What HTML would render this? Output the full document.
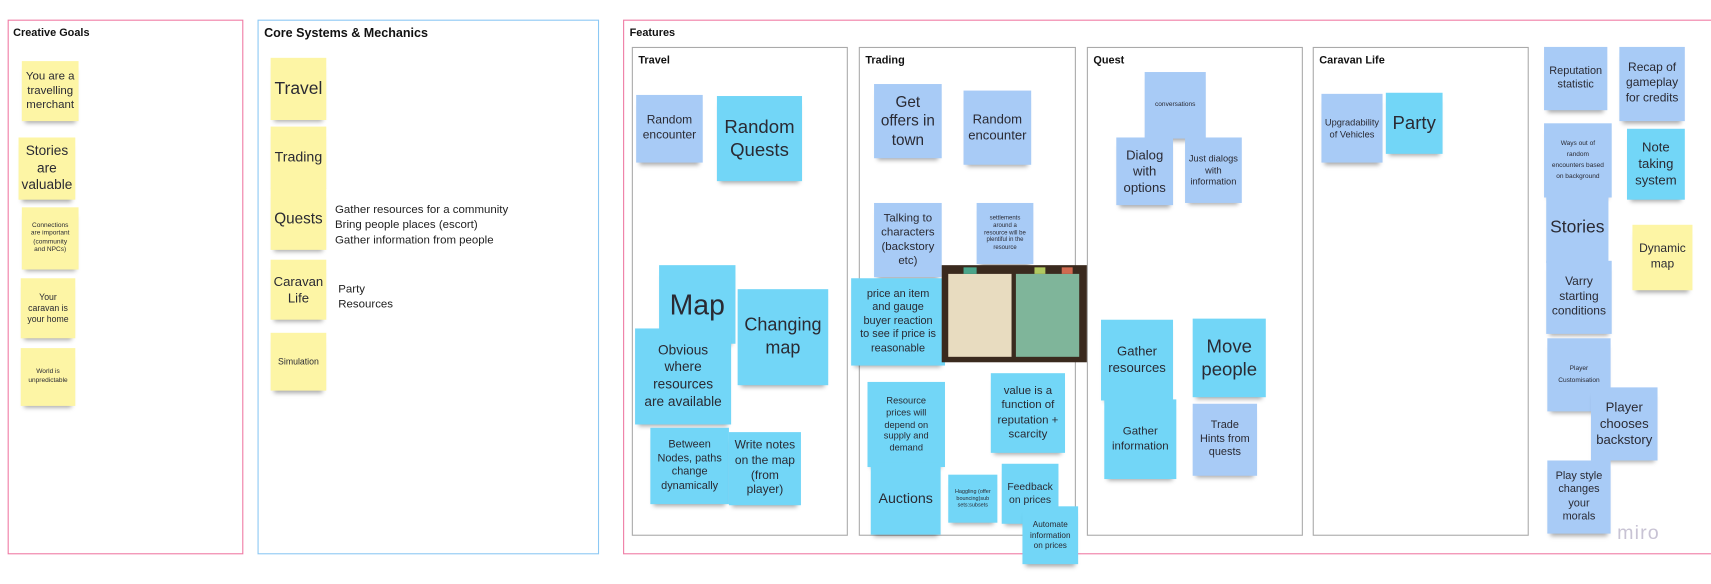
<!DOCTYPE html>
<html><head><meta charset="utf-8"><style>
html,body{margin:0;padding:0;width:1711px;height:584px;overflow:hidden;background:#fff;font-family:"Liberation Sans",sans-serif;color:#1e1e28}
#w{position:absolute;left:0;top:0;width:1568px;height:535px;transform:scale(1.0912);transform-origin:0 0}
.f{position:absolute;box-sizing:border-box;background:#fff}
.t{position:absolute;font-weight:bold;font-size:10px;color:#111}
.s{position:absolute;display:flex;align-items:center;justify-content:center;text-align:center;line-height:1.25;box-shadow:0 5px 4px -3px rgba(0,0,0,.35);box-sizing:border-box;padding:2px 2px;color:#2a2a33}
.y{background:#fdf5a5}.b{background:#a8cbf6}.c{background:#72d6f7}
.p{position:absolute;font-size:10.5px;line-height:14px;color:#222}
</style></head><body><div id="w">
<div class="f" style="left:7px;top:18px;width:216px;height:490px;border:1px solid #ef7aa4"></div>
<div class="t" style="left:12px;top:25px">Creative Goals</div>
<div class="f" style="left:236px;top:18px;width:313px;height:490px;border:1px solid #8cc8f4"></div>
<div class="t" style="left:242px;top:25px;font-size:11.5px">Core Systems &amp; Mechanics</div>
<div class="f" style="left:571px;top:18px;width:1100px;height:490px;border:1px solid #ef7aa4"></div>
<div class="t" style="left:577px;top:25px">Features</div>
<div class="f" style="left:579px;top:43px;width:198px;height:448px;border:1px solid #aaa"></div>
<div class="t" style="left:585px;top:50px">Travel</div>
<div class="f" style="left:787px;top:43px;width:199px;height:448px;border:1px solid #aaa"></div>
<div class="t" style="left:793px;top:50px">Trading</div>
<div class="f" style="left:996px;top:43px;width:198px;height:448px;border:1px solid #aaa"></div>
<div class="t" style="left:1002px;top:50px">Quest</div>
<div class="f" style="left:1203px;top:43px;width:198px;height:448px;border:1px solid #aaa"></div>
<div class="t" style="left:1209px;top:50px">Caravan Life</div>

<div class="s y" style="left:20px;top:56px;width:52px;height:55px;font-size:10.5px;padding:1px">You are a travelling merchant</div>
<div class="s y" style="left:17px;top:126px;width:52px;height:57px;font-size:12.5px">Stories are valuable</div>
<div class="s y" style="left:20px;top:190px;width:52px;height:57px;font-size:6px;padding:2px 5px">Connections are important (community and NPCs)</div>
<div class="s y" style="left:19px;top:255px;width:50px;height:55px;font-size:8px">Your caravan is your home</div>
<div class="s y" style="left:19px;top:319px;width:50px;height:53px;font-size:6px">World is unpredictable</div>

<div class="s y" style="left:248px;top:53px;width:51px;height:57px;font-size:16px">Travel</div>
<div class="s y" style="left:248px;top:116px;width:51px;height:57px;font-size:13px">Trading</div>
<div class="s y" style="left:248px;top:172px;width:51px;height:57px;font-size:14px">Quests</div>
<div class="p" style="left:307px;top:185px">Gather resources for a community<br>Bring people places (escort)<br>Gather information from people</div>
<div class="s y" style="left:248px;top:238px;width:51px;height:55px;font-size:12px">Caravan Life</div>
<div class="p" style="left:310px;top:258px">Party<br>Resources</div>
<div class="s y" style="left:248px;top:305px;width:51px;height:53px;font-size:8px">Simulation</div>

<div class="s b" style="left:583px;top:87px;width:61px;height:62px;font-size:11px">Random encounter</div>
<div class="s c" style="left:657px;top:88px;width:78px;height:78px;font-size:17px">Random Quests</div>
<div class="s c" style="left:604px;top:243px;width:70px;height:72px;font-size:26px">Map</div>
<div class="s c" style="left:676px;top:265px;width:83px;height:88px;font-size:16.5px">Changing map</div>
<div class="s c" style="left:582px;top:301px;width:88px;height:88px;font-size:12.5px;padding:2px 8px">Obvious where resources are available</div>
<div class="s c" style="left:596px;top:392px;width:72px;height:70px;font-size:10px">Between Nodes, paths change dynamically</div>
<div class="s c" style="left:668px;top:396px;width:66px;height:67px;font-size:11px">Write notes on the map (from player)</div>

<div class="s b" style="left:801px;top:77px;width:62px;height:68px;font-size:14px">Get offers in town</div>
<div class="s b" style="left:883px;top:83px;width:62px;height:68px;font-size:12px">Random encounter</div>
<div class="s b" style="left:801px;top:186px;width:62px;height:68px;font-size:10.5px">Talking to characters (backstory etc)</div>
<div class="s b" style="left:895px;top:186px;width:52px;height:56px;font-size:5.5px;padding:2px 4px">settlements around a resource will be plentiful in the resource</div>
<div class="s c" style="left:780px;top:255px;width:86px;height:80px;font-size:10px;padding:2px 6px">price an item and gauge buyer reaction to see if price is reasonable</div>
<div style="position:absolute;left:863px;top:243px;width:133px;height:89px;background:#3a2a1e">
 <div style="position:absolute;left:6px;top:8px;width:58px;height:76px;background:#e8dcc0"></div>
 <div style="position:absolute;left:68px;top:8px;width:58px;height:76px;background:#7fb59a"></div>
 <div style="position:absolute;left:20px;top:2px;width:12px;height:6px;background:#4aa58a"></div>
 <div style="position:absolute;left:85px;top:2px;width:10px;height:6px;background:#b0c860"></div>
 <div style="position:absolute;left:110px;top:2px;width:10px;height:6px;background:#d06a50"></div>
</div>
<div class="s c" style="left:795px;top:350px;width:71px;height:78px;font-size:8.5px;padding:2px 9px">Resource prices will depend on supply and demand</div>
<div class="s c" style="left:908px;top:342px;width:68px;height:73px;font-size:10.5px">value is a function of reputation + scarcity</div>
<div class="s c" style="left:798px;top:424px;width:64px;height:66px;font-size:13px">Auctions</div>
<div class="s c" style="left:869px;top:435px;width:45px;height:44px;font-size:5px">Haggling (offer bouncing)sub sets:subsets</div>
<div class="s c" style="left:918px;top:425px;width:52px;height:55px;font-size:9.5px">Feedback on prices</div>
<div class="s c" style="left:937px;top:464px;width:51px;height:53px;font-size:7.5px">Automate information on prices</div>

<div class="s b" style="left:1049px;top:66px;width:56px;height:61px;font-size:6px">conversations</div>
<div class="s b" style="left:1023px;top:126px;width:52px;height:62px;font-size:12px">Dialog with options</div>
<div class="s b" style="left:1086px;top:126px;width:52px;height:60px;font-size:8.5px;padding:1px">Just dialogs with information</div>
<div class="s c" style="left:1009px;top:293px;width:66px;height:74px;font-size:12px">Gather resources</div>
<div class="s c" style="left:1093px;top:292px;width:67px;height:72px;font-size:17px">Move people</div>
<div class="s c" style="left:1012px;top:366px;width:66px;height:73px;font-size:10.5px">Gather information</div>
<div class="s b" style="left:1093px;top:370px;width:59px;height:66px;font-size:10px;padding:2px 6px">Trade Hints from quests</div>

<div class="s b" style="left:1211px;top:86px;width:56px;height:63px;font-size:8.5px">Upgradability of Vehicles</div>
<div class="s c" style="left:1270px;top:85px;width:52px;height:56px;font-size:17px">Party</div>

<div class="s b" style="left:1415px;top:43px;width:58px;height:58px;font-size:10px">Reputation statistic</div>
<div class="s b" style="left:1484px;top:43px;width:60px;height:68px;font-size:11px">Recap of gameplay for credits</div>
<div class="s b" style="left:1415px;top:113px;width:62px;height:68px;font-size:6px;line-height:1.7;padding:2px 6px">Ways out of random encounters based on background</div>
<div class="s c" style="left:1491px;top:118px;width:53px;height:65px;font-size:12px">Note taking system</div>
<div class="s b" style="left:1417px;top:176px;width:57px;height:65px;font-size:16px">Stories</div>
<div class="s y" style="left:1496px;top:206px;width:55px;height:60px;font-size:11px">Dynamic map</div>
<div class="s b" style="left:1417px;top:239px;width:60px;height:67px;font-size:11px">Varry starting conditions</div>
<div class="s b" style="left:1418px;top:310px;width:58px;height:67px;font-size:6px;line-height:1.7">Player Customisation</div>
<div class="s b" style="left:1458px;top:355px;width:61px;height:67px;font-size:12px">Player chooses backstory</div>
<div class="s b" style="left:1418px;top:422px;width:58px;height:67px;font-size:10px;padding:2px 5px">Play style changes your morals</div>
<div style="position:absolute;left:1482px;top:478px;font-size:18px;color:#c8c3d4;letter-spacing:1px">miro</div>
</div></body></html>
